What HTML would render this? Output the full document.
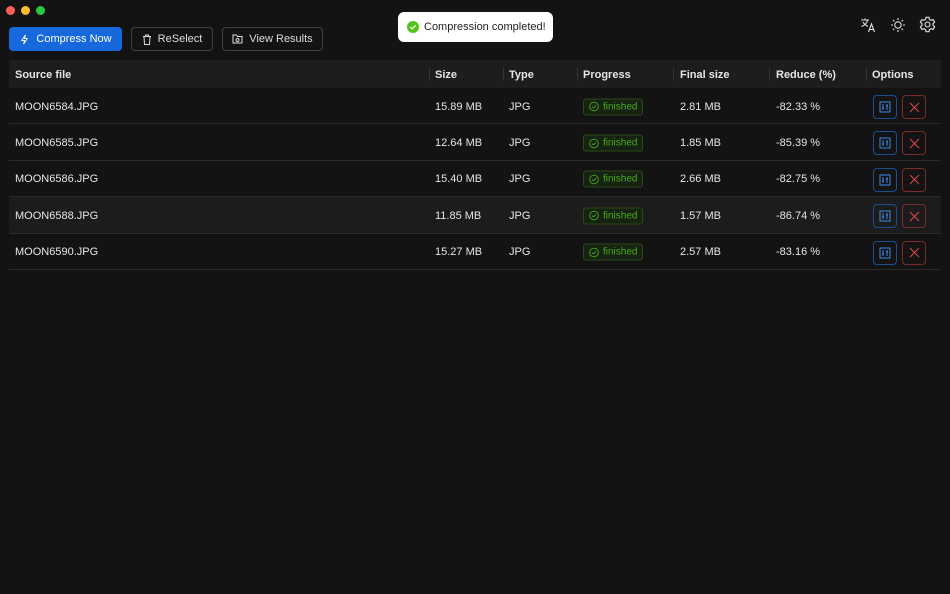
<!DOCTYPE html>
<html><head><meta charset="utf-8"><style>
*{box-sizing:border-box;margin:0;padding:0}
body{width:950px;height:594px;background:#131313;font-family:"Liberation Sans",sans-serif;color:#e6e6e6;position:relative;overflow:hidden;font-size:11px}
.dot{position:absolute;top:6px;width:9px;height:9px;border-radius:50%}
.btn{position:absolute;top:27px;height:24px;border-radius:4px;display:flex;align-items:center;justify-content:center;gap:6px;font-size:11px}
.b1{left:9px;width:113px;background:#1668dc;color:#fff}
.b2{left:131px;width:82px;border:1px solid #424242;color:#ddd}
.b3{left:222px;width:101px;border:1px solid #424242;color:#ddd}
.toast{position:absolute;left:398px;top:12px;width:155px;height:30px;background:#fff;border-radius:6px;color:#222;font-size:11px;display:flex;align-items:center;padding-left:9px;gap:5px}
.tbl{position:absolute;left:9px;top:60px;width:932px}
.row{height:36.4px;position:relative;border-bottom:1px solid #2a2a2a}
.hd{height:28px;background:#1d1d1d;font-weight:bold;border-bottom:none}
.row span{position:absolute;top:calc(50% + 1px);transform:translateY(-50%)}
.sep{position:absolute;top:7px;height:14px;width:1px;background:#333}
.hl{background:#1c1c1c}
.row span.tag{border:1px solid #274916;background:#162312;color:#49aa19;border-radius:3px;height:17px;width:60px;font-size:10px;display:flex;align-items:center;gap:4px;padding-left:5px}
.ob{position:absolute;top:7px;width:24px;height:24px;border-radius:4px;display:flex;align-items:center;justify-content:center}
.o1{left:864px;border:1px solid #1f4d8f}
.o2{left:893px;border:1px solid #7a2c2c}
</style></head><body>
<div class="dot" style="left:6px;background:#fe5f57"></div>
<div class="dot" style="left:21px;background:#febc2e"></div>
<div class="dot" style="left:36px;background:#28c840"></div>
<div class="btn b1"><svg width="11" height="11" viewBox="0 0 12 12" fill="none" stroke="#fff" stroke-width="1"><path d="M7 1L3 7h3l-1 4 4-6H6z"/></svg>Compress Now</div>
<div class="btn b2"><svg width="10" height="11" viewBox="0 0 10 11" fill="none" stroke="#ddd" stroke-width="1"><path d="M1 2.5h8M3.5 2.5V1h3v1.5M2 2.5l.5 8h5l.5-8"/></svg>ReSelect</div>
<div class="btn b3"><svg width="11" height="10" viewBox="0 0 11 10" fill="none" stroke="#ddd" stroke-width="1"><path d="M1 1h3.5l1 1.5H10v6.5H1z"/><circle cx="5.5" cy="6" r="1.5"/></svg>View Results</div>
<div class="toast"><svg width="12" height="12" viewBox="0 0 12 12"><circle cx="6" cy="6" r="6" fill="#52c41a"/><path d="M3.3 6.2l1.8 1.7 3.6-3.6" stroke="#fff" stroke-width="1.3" fill="none"/></svg>Compression completed!</div>
<svg style="position:absolute;left:860px;top:17px" width="16" height="16" viewBox="0 0 16 16" fill="none" stroke="#ddd" stroke-width="1.1"><path d="M1 3h8M5 1.5V3M7.5 3c-.5 3-3 5.5-6 6.5M3 5c1 2 3 3.5 5 4.5M8.5 15l3-8 3 8M9.5 12.5h4"/></svg>
<svg style="position:absolute;left:890px;top:17px" width="16" height="16" viewBox="0 0 16 16" fill="none" stroke="#ddd" stroke-width="1.1"><circle cx="8" cy="8" r="3.2"/><path d="M8 1v2M8 13v2M1 8h2M13 8h2M3 3l1.4 1.4M11.6 11.6L13 13M3 13l1.4-1.4M11.6 4.4L13 3"/></svg>
<svg style="position:absolute;left:919px;top:16px" width="17" height="17" viewBox="0 0 16 16" fill="none" stroke="#ddd" stroke-width="1.1"><path d="M6.6 1.2h2.8l.4 2 1.6.9 1.9-.7 1.4 2.4-1.5 1.3v1.8l1.5 1.3-1.4 2.4-1.9-.7-1.6.9-.4 2H6.6l-.4-2-1.6-.9-1.9.7-1.4-2.4 1.5-1.3V7.1L1.3 5.8l1.4-2.4 1.9.7 1.6-.9z"/><circle cx="8" cy="8" r="2.3"/></svg>
<div class="tbl">
<div class="row hd"><span style="left:6px">Source file</span><span style="left:426px">Size</span><span style="left:500px">Type</span><span style="left:574px">Progress</span><span style="left:671px">Final size</span><span style="left:767px">Reduce (%)</span><span style="left:863px">Options</span>
<i class="sep" style="left:420px"></i><i class="sep" style="left:494px"></i><i class="sep" style="left:568px"></i><i class="sep" style="left:664px"></i><i class="sep" style="left:760px"></i><i class="sep" style="left:857px"></i></div>
<div class="row"><span style="left:6px">MOON6584.JPG</span><span style="left:426px">15.89 MB</span><span style="left:500px">JPG</span><span style="left:574px" class="tag"><svg width="10" height="10" viewBox="0 0 10 10" fill="none" stroke="#49aa19" stroke-width=".9"><circle cx="5" cy="5" r="4.3"/><path d="M3 5.1l1.4 1.3 2.6-2.6"/></svg>finished</span><span style="left:671px">2.81 MB</span><span style="left:767px">-82.33 %</span><div class="ob o1"><svg width="12" height="12" viewBox="0 0 12 12" fill="none" stroke="#3c89e8"><rect x="1" y="1" width="10" height="10"/><path d="M4 3v6M8 3v6M3 7h2M7 5h2"/></svg></div><div class="ob o2"><svg width="11" height="11" viewBox="0 0 11 11" stroke="#dc4446" stroke-width="1.1"><path d="M1 1l9 9M10 1l-9 9"/></svg></div></div>
<div class="row"><span style="left:6px">MOON6585.JPG</span><span style="left:426px">12.64 MB</span><span style="left:500px">JPG</span><span style="left:574px" class="tag"><svg width="10" height="10" viewBox="0 0 10 10" fill="none" stroke="#49aa19" stroke-width=".9"><circle cx="5" cy="5" r="4.3"/><path d="M3 5.1l1.4 1.3 2.6-2.6"/></svg>finished</span><span style="left:671px">1.85 MB</span><span style="left:767px">-85.39 %</span><div class="ob o1"><svg width="12" height="12" viewBox="0 0 12 12" fill="none" stroke="#3c89e8"><rect x="1" y="1" width="10" height="10"/><path d="M4 3v6M8 3v6M3 7h2M7 5h2"/></svg></div><div class="ob o2"><svg width="11" height="11" viewBox="0 0 11 11" stroke="#dc4446" stroke-width="1.1"><path d="M1 1l9 9M10 1l-9 9"/></svg></div></div>
<div class="row"><span style="left:6px">MOON6586.JPG</span><span style="left:426px">15.40 MB</span><span style="left:500px">JPG</span><span style="left:574px" class="tag"><svg width="10" height="10" viewBox="0 0 10 10" fill="none" stroke="#49aa19" stroke-width=".9"><circle cx="5" cy="5" r="4.3"/><path d="M3 5.1l1.4 1.3 2.6-2.6"/></svg>finished</span><span style="left:671px">2.66 MB</span><span style="left:767px">-82.75 %</span><div class="ob o1"><svg width="12" height="12" viewBox="0 0 12 12" fill="none" stroke="#3c89e8"><rect x="1" y="1" width="10" height="10"/><path d="M4 3v6M8 3v6M3 7h2M7 5h2"/></svg></div><div class="ob o2"><svg width="11" height="11" viewBox="0 0 11 11" stroke="#dc4446" stroke-width="1.1"><path d="M1 1l9 9M10 1l-9 9"/></svg></div></div>
<div class="row hl"><span style="left:6px">MOON6588.JPG</span><span style="left:426px">11.85 MB</span><span style="left:500px">JPG</span><span style="left:574px" class="tag"><svg width="10" height="10" viewBox="0 0 10 10" fill="none" stroke="#49aa19" stroke-width=".9"><circle cx="5" cy="5" r="4.3"/><path d="M3 5.1l1.4 1.3 2.6-2.6"/></svg>finished</span><span style="left:671px">1.57 MB</span><span style="left:767px">-86.74 %</span><div class="ob o1"><svg width="12" height="12" viewBox="0 0 12 12" fill="none" stroke="#3c89e8"><rect x="1" y="1" width="10" height="10"/><path d="M4 3v6M8 3v6M3 7h2M7 5h2"/></svg></div><div class="ob o2"><svg width="11" height="11" viewBox="0 0 11 11" stroke="#dc4446" stroke-width="1.1"><path d="M1 1l9 9M10 1l-9 9"/></svg></div></div>
<div class="row"><span style="left:6px">MOON6590.JPG</span><span style="left:426px">15.27 MB</span><span style="left:500px">JPG</span><span style="left:574px" class="tag"><svg width="10" height="10" viewBox="0 0 10 10" fill="none" stroke="#49aa19" stroke-width=".9"><circle cx="5" cy="5" r="4.3"/><path d="M3 5.1l1.4 1.3 2.6-2.6"/></svg>finished</span><span style="left:671px">2.57 MB</span><span style="left:767px">-83.16 %</span><div class="ob o1"><svg width="12" height="12" viewBox="0 0 12 12" fill="none" stroke="#3c89e8"><rect x="1" y="1" width="10" height="10"/><path d="M4 3v6M8 3v6M3 7h2M7 5h2"/></svg></div><div class="ob o2"><svg width="11" height="11" viewBox="0 0 11 11" stroke="#dc4446" stroke-width="1.1"><path d="M1 1l9 9M10 1l-9 9"/></svg></div></div>
</div>
</body></html>
